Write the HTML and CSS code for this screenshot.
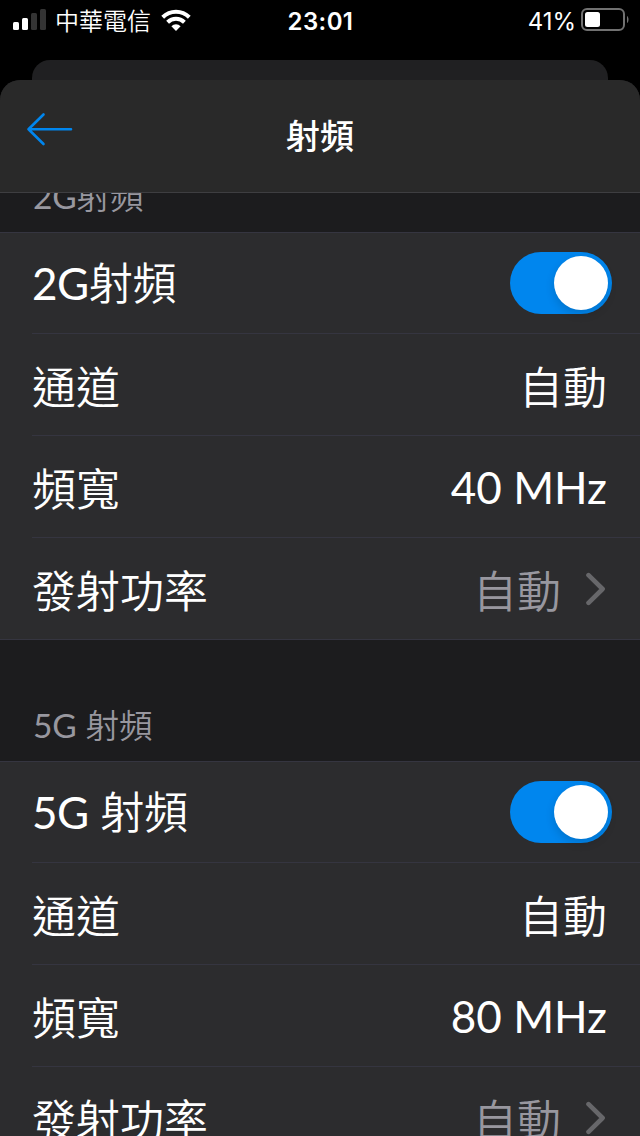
FILE: index.html
```html
<!DOCTYPE html>
<html lang="zh-Hant">
<head>
  <meta charset="UTF-8" />
  <meta name="viewport" content="width=device-width, initial-scale=1.0" />
  <title>射頻</title>
  <link rel="stylesheet" href="styles.css">
</head>
<body>
  <div class="status-bar">
    <div class="status-left">
      <svg class="signal" width="34" height="22" viewBox="0 0 34 22">
        <rect x="0" y="13" width="6" height="8" rx="1.5" fill="#fff" />
        <rect x="9" y="9" width="6" height="12" rx="1.5" fill="#fff" />
        <rect x="18" y="4" width="6" height="17" rx="1.5" fill="#343434" />
        <rect x="27" y="0" width="6" height="21" rx="1.5" fill="#343434" />
      </svg>
      <span class="carrier">中華電信</span>
      <svg class="wifi" width="30" height="22" viewBox="0 0 30 22" fill="none" stroke="#fff" stroke-width="4">
        <path d="M1.7 8.2a19 19 0 0 1 26.6 0" />
        <path d="M6.6 13.2a12 12 0 0 1 16.8 0" />
        <path d="M15 22l-4.6-4.8a6.6 6.6 0 0 1 9.2 0z" fill="#fff" stroke="none" />
      </svg>
    </div>
    <div class="time">23:01</div>
    <div class="status-right">
      <span class="percent">41%</span>
      <svg class="battery" width="48" height="24" viewBox="0 0 48 24">
        <rect x="1" y="1" width="42" height="21" rx="5" fill="none" stroke="#717171" stroke-width="2" />
        <rect x="4" y="4" width="15" height="15" rx="2.5" fill="#fff" />
        <path d="M46 8c2 1 2 6 0 7z" fill="#717171" />
      </svg>
    </div>
  </div>

  <div class="back-card"></div>

  <div class="sheet">
    <div class="header">
      <svg class="back" width="48" height="34" viewBox="0 0 48 34" fill="none" stroke="#0086ee" stroke-width="2.6" stroke-linecap="round" stroke-linejoin="round">
        <path d="M17.5 2.5L2.5 17.3l15 14.7M2.5 17.3H45" />
      </svg>
      <h1>射頻</h1>
    </div>

    <div class="list">
      <div class="content">
        <h2><span class="latin">2G</span>射頻</h2>
        <div class="group">
          <div class="row">
            <span class="name"><span class="latin">2G</span>射頻</span>
            <div class="toggle"><div class="knob"></div></div>
          </div>
          <div class="row">
            <span>通道</span>
            <span>自動</span>
          </div>
          <div class="row">
            <span>頻寬</span>
            <span class="latin">40 MHz</span>
          </div>
          <div class="row">
            <span>發射功率</span>
            <span class="link">自動
              <svg width="20" height="34" viewBox="0 0 20 34" fill="none" stroke="#67676a" stroke-width="4.6" stroke-linecap="round" stroke-linejoin="round">
                <path d="M2.5 3.2L16.6 17L2.5 30.8" />
              </svg>
            </span>
          </div>
        </div>

        <h2><span class="latin">5G</span> 射頻</h2>
        <div class="group">
          <div class="row">
            <span class="name"><span class="latin">5G</span> 射頻</span>
            <div class="toggle"><div class="knob"></div></div>
          </div>
          <div class="row">
            <span>通道</span>
            <span>自動</span>
          </div>
          <div class="row">
            <span>頻寬</span>
            <span class="latin">80 MHz</span>
          </div>
          <div class="row">
            <span>發射功率</span>
            <span class="link">自動
              <svg width="20" height="34" viewBox="0 0 20 34" fill="none" stroke="#67676a" stroke-width="4.6" stroke-linecap="round" stroke-linejoin="round">
                <path d="M2.5 3.2L16.6 17L2.5 30.8" />
              </svg>
            </span>
          </div>
        </div>
      </div>
    </div>
  </div>
</body>
</html>
```
FILE: styles.css
```css
* {
  box-sizing: border-box;
}
body {
  margin: 0;
  height: 1136px;
  overflow: hidden;
  display: flex;
  flex-direction: column;
  background: #000;
  color: #fff;
  font-family: Lato, "Noto Sans CJK TC", sans-serif;
}
.status-bar {
  height: 60px;
  flex: none;
  display: grid;
  grid-template-columns: 1fr auto 1fr;
  align-items: start;
  padding: 0 12px 0 13px;
  font-family: Inter, "Noto Sans CJK TC", sans-serif;
  font-size: 24px;
  line-height: 43px;
}
.status-left, .status-right {
  display: flex;
}
.status-right {
  justify-content: flex-end;
  margin-right: -1px;
}
.signal {
  margin-top: 9px;
}
.carrier {
  margin-left: 8px;
  font-weight: 350;
}
.wifi {
  margin: 9px 0 0 10px;
}
.time {
  font-weight: 600;
  letter-spacing: 0.4px;
}
.percent {
  font-size: 24px;
}
.battery {
  margin: 8px 0 0 5px;
}
.back-card {
  height: 20px;
  flex: none;
  margin: 0 32px;
  background: #202022;
  border-radius: 18px 18px 0 0;
}
.sheet {
  flex: 1;
  min-height: 0;
  display: flex;
  flex-direction: column;
  background: #1c1c1e;
  border-radius: 20px 20px 0 0;
  overflow: hidden;
}
.header {
  height: 113px;
  flex: none;
  display: grid;
  grid-template-columns: 1fr auto 1fr;
  padding: 0 26px;
  background: #292929;
  border-bottom: 1px solid #3e3e41;
}
.back {
  margin-top: 32px;
}
h1 {
  margin: 0;
  font-size: 34px;
  font-weight: 500;
  line-height: 112px;
}
.list {
  flex: 1;
  min-height: 0;
  overflow: hidden;
}
/* scrolled so the first heading is half under the header */
.content {
  margin-top: -82px;
}
h2 {
  margin: 0;
  height: 121px;
  padding: 60px 33px 0;
  font-size: 33.5px;
  font-weight: 350;
  line-height: 50px;
  letter-spacing: -0.1px;
  color: #98979f;
}
.latin {
  font-weight: 400;
}
.group {
  background: #2c2c2e;
  border-top: 1px solid #353540;
}
.row {
  height: 102px;
  display: flex;
  align-items: center;
  justify-content: space-between;
  margin-left: 32px;
  padding-right: 33px;
  border-bottom: 1px solid #353540;
  font-size: 44px;
  font-weight: 350;
}
.row:first-child {
  height: 101px;
  padding-right: 28px;
}
.row:last-child {
  margin-left: 0;
  padding-left: 32px;
}
.name {
  margin-bottom: 4px;
  letter-spacing: -0.4px;
}
.link {
  display: flex;
  align-items: center;
  gap: 25px;
  margin-right: 1px;
  color: #98979f;
}
.toggle {
  width: 102px;
  height: 62px;
  padding: 4px;
  display: flex;
  justify-content: flex-end;
  background: #0086ee;
  border-radius: 31px;
}
.knob {
  width: 54px;
  height: 54px;
  background: #fff;
  border-radius: 50%;
  box-shadow: 0 4px 10px rgba(0,0,0,0.15);
}
```
